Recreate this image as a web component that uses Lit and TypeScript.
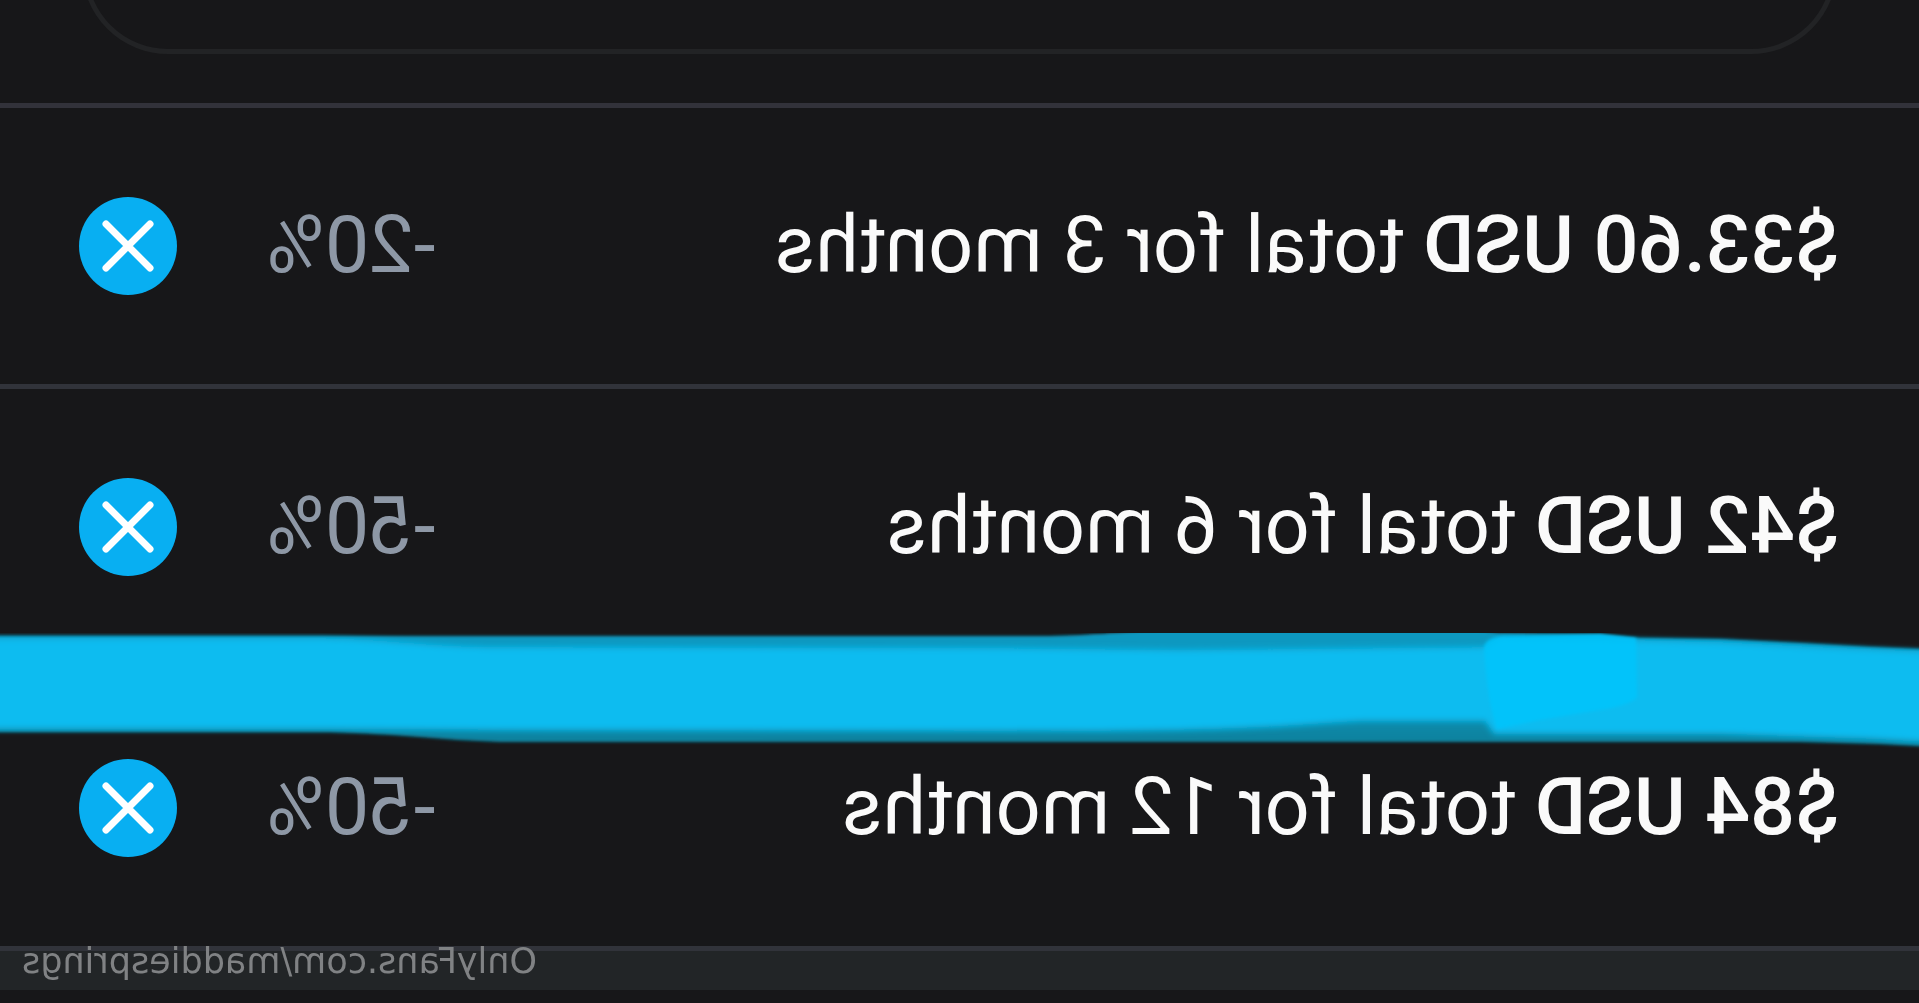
import { LitElement, html, css } from "lit";
import { customElement, state } from "lit/decorators.js";

interface Offer {
  price: string;
  term: string;
  discount: string;
}

@customElement("app-root")
export class AppRoot extends LitElement {
  static styles = css`
    :host {
      display: block;
      min-height: 100vh;
      background: #171719;
      font-family: Roboto, "Liberation Sans", sans-serif;
    }
    .screen {
      position: relative;
      min-height: 100vh;
      overflow: hidden;
    }
    /* The whole view is shown as a mirror image. */
    .mirror {
      transform: scaleX(-1);
    }
    .top {
      padding: 0 82px 49px;
      border-bottom: 5px solid #32323a;
    }
    .card {
      box-sizing: border-box;
      height: 54px;
      overflow: hidden;
      display: flex;
      align-items: flex-end;
    }
    .card-edge {
      box-sizing: border-box;
      flex: 1;
      height: 200px;
      border: 5px solid #222325;
      border-radius: 86px;
    }
    .offers {
      margin: 0;
      padding: 0;
      list-style: none;
    }
    .offer {
      display: flex;
      align-items: center;
      height: 276px;
      padding: 0 79px;
      border-bottom: 5px solid #31333a;
    }
    .label,
    .discount {
      padding-bottom: 2px;
      font-size: 79px;
      line-height: 92px;
      white-space: nowrap;
    }
    .label {
      flex: 1;
      color: #fafafa;
    }
    .price {
      font-weight: 500;
    }
    .discount {
      margin-right: 90px;
      color: #8e98a6;
    }
    .remove {
      display: block;
      width: 98px;
      height: 98px;
      padding: 0;
      border: 0;
      border-radius: 50%;
      background: #08aff2;
    }
    .remove svg {
      display: block;
      width: 100%;
      height: 100%;
    }
    .footer {
      height: 39px;
      background: #222527;
    }
    .watermark {
      position: absolute;
      right: 22px;
      top: 941px;
      color: #808284;
      font-family: "DejaVu Sans", sans-serif;
      font-size: 35px;
      line-height: 40px;
      text-decoration: none;
    }
    .marker {
      position: absolute;
      left: 0;
      top: 633px;
      width: 100%;
      height: 124px;
      pointer-events: none;
    }
  `;

  @state()
  private offers: Offer[] = [
    { price: "$33.60 USD", term: "total for 3 months", discount: "-20%" },
    { price: "$42 USD", term: "total for 6 months", discount: "-50%" },
    { price: "$84 USD", term: "total for 12 months", discount: "-50%" },
  ];

  private renderOffer(offer: Offer) {
    return html`
      <li class="offer">
        <span class="label"><span class="price">${offer.price}</span> ${offer.term}</span>
        <span class="discount">${offer.discount}</span>
        <button class="remove" type="button" aria-label="Remove">
          <svg viewBox="0 0 98 98" aria-hidden="true">
            <path d="M27 27 71 71M71 27 27 71" fill="none" stroke="#fff" stroke-width="7" stroke-linecap="round" />
          </svg>
        </button>
      </li>
    `;
  }

  render() {
    return html`
      <div class="screen">
        <main class="mirror">
          <div class="top">
            <div class="card"><div class="card-edge"></div></div>
          </div>
          <ul class="offers">
            ${this.offers.map((offer) => this.renderOffer(offer))}
          </ul>
          <div class="footer"></div>
          <a class="watermark" href="#">OnlyFans.com/maddiesprings</a>
        </main>
        <svg class="marker" viewBox="0 632 1919 124" preserveAspectRatio="none" aria-hidden="true">
          <defs>
            <filter id="soft" filterUnits="userSpaceOnUse" x="-20" y="600" width="1960" height="180">
              <feGaussianBlur stdDeviation="1.5" />
            </filter>
            <filter id="softer" filterUnits="userSpaceOnUse" x="-20" y="600" width="1960" height="180">
              <feGaussianBlur stdDeviation="3" />
            </filter>
            <linearGradient id="fringe" x1="0" y1="0" x2="0" y2="1">
              <stop offset="0" stop-color="#0b98c0" />
              <stop offset="0.5" stop-color="#0b98c0" />
              <stop offset="1" stop-color="#0a7f9a" />
            </linearGradient>
          </defs>
          <path
            filter="url(#soft)"
            fill="url(#fringe)"
            d="M-20 635H1040C1090 635 1110 631 1180 628H1470L1500 632 1600 633 1640 637 1720 638 1800 642 1870 646 1940 649V746L1880 743 1800 741H500C440 739 400 733 330 731H-20Z"
          />
          <path
            filter="url(#softer)"
            fill="#08bcf0"
            d="M-20 637H310C380 637 430 646 500 646L1000 647 1180 649 1485 646 1500 636 1640 639 1720 641 1820 646 1940 651V742L1870 738 1720 733H1494L1485 720H1360C1310 723 1280 727 1180 729L1100 730 500 729 330 728H-20Z"
          />
          <path
            filter="url(#soft)"
            fill="#04c4fc"
            fill-opacity="0.85"
            d="M1484 646Q1486 637 1500 636L1600 633 1636 637 1637 696Q1632 704 1600 709L1540 719 1497 728Q1487 700 1484 646Z"
          />
        </svg>
      </div>
    `;
  }
}
